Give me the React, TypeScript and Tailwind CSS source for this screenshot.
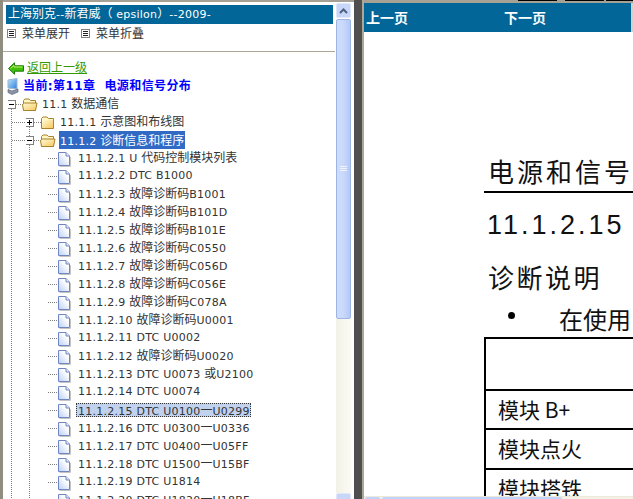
const textFont = '[font-family:"DejaVu_Sans","Noto_Sans_CJK_SC",sans-serif]'

type Row = { level: number; label: string; kind: 'open' | 'closed' | 'file'; state?: 'section' | 'focus' }

const rows: Row[] = [
  { level: 0, label: '11.1 数据通信', kind: 'open' },
  { level: 1, label: '11.1.1 示意图和布线图', kind: 'closed' },
  { level: 1, label: '11.1.2 诊断信息和程序', kind: 'open', state: 'section' },
  { level: 2, label: '11.1.2.1 U 代码控制模块列表', kind: 'file' },
  { level: 2, label: '11.1.2.2 DTC B1000', kind: 'file' },
  { level: 2, label: '11.1.2.3 故障诊断码B1001', kind: 'file' },
  { level: 2, label: '11.1.2.4 故障诊断码B101D', kind: 'file' },
  { level: 2, label: '11.1.2.5 故障诊断码B101E', kind: 'file' },
  { level: 2, label: '11.1.2.6 故障诊断码C0550', kind: 'file' },
  { level: 2, label: '11.1.2.7 故障诊断码C056D', kind: 'file' },
  { level: 2, label: '11.1.2.8 故障诊断码C056E', kind: 'file' },
  { level: 2, label: '11.1.2.9 故障诊断码C078A', kind: 'file' },
  { level: 2, label: '11.1.2.10 故障诊断码U0001', kind: 'file' },
  { level: 2, label: '11.1.2.11 DTC U0002', kind: 'file' },
  { level: 2, label: '11.1.2.12 故障诊断码U0020', kind: 'file' },
  { level: 2, label: '11.1.2.13 DTC U0073 或U2100', kind: 'file' },
  { level: 2, label: '11.1.2.14 DTC U0074', kind: 'file' },
  { level: 2, label: '11.1.2.15 DTC U0100一U0299', kind: 'file', state: 'focus' },
  { level: 2, label: '11.1.2.16 DTC U0300一U0336', kind: 'file' },
  { level: 2, label: '11.1.2.17 DTC U0400一U05FF', kind: 'file' },
  { level: 2, label: '11.1.2.18 DTC U1500一U15BF', kind: 'file' },
  { level: 2, label: '11.1.2.19 DTC U1814', kind: 'file' },
  { level: 2, label: '11.1.2.20 DTC U1820一U18BF', kind: 'file' },
]

// chinese glyphs are a pixel bigger than the latin ones in the shot
function Mixed({ text }: { text: string }) {
  const parts = text.split(/([\u4e00-\u9fff\uff08\uff09]+)/)
  return (
    <span className="whitespace-pre tracking-[0.25px]">
      {parts.map((p, i) =>
        /[\u4e00-\u9fff\uff08\uff09]/.test(p) ? (
          <span key={i} className="text-[12px] tracking-normal">{p}</span>
        ) : (
          <span key={i}>{p}</span>
        ),
      )}
    </span>
  )
}

function Guide({ line = true, branch }: { line?: boolean; branch?: boolean }) {
  return (
    <svg width="18" height="18" className="shrink-0" shapeRendering="crispEdges">
      {line && <path d="M3.5 0V18" stroke="#808080" strokeDasharray="1 1" />}
      {branch && <path d="M4 9.5H18" stroke="#808080" strokeDasharray="1 1" />}
    </svg>
  )
}

function Expander({ open, above }: { open: boolean; above?: boolean }) {
  return (
    <svg width="18" height="18" className="shrink-0" shapeRendering="crispEdges">
      {above && <path d="M3.5 0V5" stroke="#808080" strokeDasharray="1 1" />}
      <path d="M3.5 14V18" stroke="#808080" strokeDasharray="1 1" />
      <path d="M8 9.500H18" stroke="#808080" strokeDasharray="1 1" />
      <rect x="-0.500" y="5.500" width="8" height="8" fill="#fff" stroke="#808080" />
      <path d="M1 9.500H6" stroke="#000" />
      {!open && <path d="M3.500 7V12" stroke="#000" />}
    </svg>
  )
}

function FolderIcon({ open }: { open: boolean }) {
  return (
    <svg width="16" height="14" viewBox="0 0 16 14" className="mt-[1px] shrink-0">
      <defs>
        <linearGradient id="folder" x1="0" y1="0" x2="1" y2="1">
          <stop offset="0" stopColor="#fffbd8" />
          <stop offset="1" stopColor="#f6c75c" />
        </linearGradient>
      </defs>
      <path d="M1.500 2.500 3 1h4l1.500 1.500h5v10h-12z" fill="#fff6c4" stroke="#a9822c" />
      {open ? (
        <path d="M.5 6.500 2.500 5h12.500l-1.500 7.500h-12z" fill="url(#folder)" stroke="#a9822c" />
      ) : (
        <path d="M2 4h11v8H2z" fill="url(#folder)" />
      )}
    </svg>
  )
}

function FileIcon() {
  return (
    <svg width="13" height="15" viewBox="0 0 13 15" className="mt-[3px] shrink-0">
      <defs>
        <linearGradient id="page" x1="0" y1="1" x2="1" y2="0">
          <stop offset="0" stopColor="#bdcff5" />
          <stop offset="0.7" stopColor="#ffffff" />
        </linearGradient>
      </defs>
      <path d="M.5.5h7.500l3.500 3.500v9.500h-11z" fill="url(#page)" stroke="#6f86c4" />
      <path d="M8 .5v3.500h3.500" fill="#dfe7fa" stroke="#6f86c4" />
      <path d="M1.500 14.500h11V5" fill="none" stroke="#c4c4c4" />
    </svg>
  )
}

function BackArrow() {
  return (
    <svg width="16" height="13" viewBox="0 0 16 13" className="mt-[1px] shrink-0">
      <path d="M.5 6.500 6.500.8V3.800H15.500V9.200H6.500V12.200Z" fill="#3fc20c" stroke="#1c7a04" />
      <path d="M2.500 6.500 6 3.500V5H14.500" fill="none" stroke="#c7f06a" />
    </svg>
  )
}

function PcIcon() {
  return (
    <svg width="12" height="17" viewBox="0 0 12 17" className="shrink-0">
      <defs>
        <linearGradient id="screen" x1="0" y1="0" x2="1" y2="1">
          <stop offset="0" stopColor="#bfe6fb" />
          <stop offset="1" stopColor="#2a7fe0" />
        </linearGradient>
      </defs>
      <path d="M1 2 10 .5V11L1 10z" fill="url(#screen)" stroke="#9db6cf" />
      <path d="M1 11.500l4 1.500 6-2v3l-6 2.500-4-2z" fill="#8d95a8" stroke="#5b6273" strokeWidth=".7" />
    </svg>
  )
}

function MenuIcon() {
  return (
    <svg width="9" height="9" className="shrink-0" shapeRendering="crispEdges">
      <rect x=".5" y=".5" width="8" height="8" fill="#fff" stroke="#808080" />
      <path d="M2 2.500h5M2 4.500h5M2 6.500h5" stroke="#222" />
    </svg>
  )
}

function TreeRow({ row }: { row: Row }) {
  const isFile = row.kind === 'file'
  const isSection = row.state === 'section'
  const isFocus = row.state === 'focus'
  return (
    <div className="flex h-[18px] items-center whitespace-nowrap">
      {row.level === 1 && <Guide branch />}
      {row.level === 2 && <Guide />}
      {row.level === 2 && <Guide />}
      {isFile ? <Guide line={false} branch /> : <Expander open={row.kind === 'open'} above={isSection} />}
      <div className="ml-[-4px]">{isFile ? <FileIcon /> : <FolderIcon open={row.kind === 'open'} />}</div>
      <span
        className={`block ${isFile ? 'ml-[5px] pl-[2px] pr-[1px]' : 'ml-[3px] px-[1px]'} ${
          isSection ? 'h-[18px] bg-[#316ac5] leading-[20px] text-white' : 'text-[#333333]'
        } ${isFocus ? 'h-[14px] bg-[#c1d2ee] leading-[16px] outline-1 outline-dotted outline-[#333333] outline-offset-[-1px]' : ''} ${
          !isSection && !isFocus ? 'mt-[1px]' : ''
        }`}
      >
        <Mixed text={row.label} />
      </span>
    </div>
  )
}

function LeftScrollbar() {
  return (
    <div className="flex w-[15px] shrink-0 flex-col">
      <div className="flex h-[15px] shrink-0 items-center justify-center rounded-[2px] border border-[#dfe7fb] bg-[#c8d7f8]">
        <svg width="9" height="6" viewBox="0 0 9 6"><path d="M1 5l3.500-3.500L8 5" fill="none" stroke="#4d6185" strokeWidth="2" /></svg>
      </div>
      <div className="mt-[1px] flex h-[300px] shrink-0 items-center justify-center rounded-[2px] border border-[#9db4e6] bg-gradient-to-r from-[#cfdcfb] via-[#c9d8fb] to-[#b2c8f6]">
        <svg width="7" height="6" shapeRendering="crispEdges"><path d="M0 .5h7M0 2.500h7M0 4.500h7" stroke="#eef3ff" /></svg>
      </div>
      <div className="h-[174px] shrink-0 bg-gradient-to-r from-[#f3f1e6] to-[#fbfaf5]" />
      <div className="h-[15px] shrink-0 rounded-[2px] border border-[#dfe7fb] bg-[#c8d7f8]" />
    </div>
  )
}

export default function App() {
  return (
    <div className={`flex h-[499px] w-[633px] overflow-hidden bg-[#ece9d8] ${textFont} text-[11px]`}>
      <div className="w-[3px] shrink-0 bg-[#8f8d80]" />
      <div className="flex w-[351px] shrink-0 flex-col border-t-[2px] border-[#a5a295] bg-white">
        <div className="flex min-h-0 flex-1">
          <div className="w-[332px] shrink-0 overflow-hidden pt-[3px]">
            <div className="ml-[3px] mr-[2px] flex h-[19px] items-center bg-[#026698] pl-[2px] text-white">
              <Mixed text="上海别克--新君威（ epsilon）--2009-" />
            </div>
            <div className="flex h-[28px] items-center gap-[6px] border-b border-[#aca899] pb-[8px] pl-[4px] text-[12px] text-[#333333]">
              <MenuIcon />
              <span>菜单展开</span>
              <div className="ml-[5px]"><MenuIcon /></div>
              <span>菜单折叠</span>
            </div>
            <div className="ml-[5px] mt-[9px] flex h-[14px] items-center gap-[3px]">
              <BackArrow />
              <span className="text-[12px] leading-none text-[#339900] underline">返回上一级</span>
            </div>
            <div className="ml-[4px] mt-[2px] flex h-[18px] items-center gap-[4px]">
              <PcIcon />
              <span className="whitespace-nowrap text-[12px] font-bold leading-none tracking-[0.4px] text-[#0000ff]">当前:第11章&nbsp; 电源和信号分布</span>
            </div>
            <div className="ml-[5px]">
              {rows.map((r) => (
                <TreeRow key={r.label} row={r} />
              ))}
            </div>
          </div>
          <div className="ml-[1px] pt-[1px]"><LeftScrollbar /></div>
        </div>
      </div>
      <div className="w-[10px] shrink-0 border-r-[2px] border-[#aca899] bg-[#4f4f4f]" />
      <div className="flex min-w-0 flex-1 flex-col bg-white">
        <div className="flex h-[3px] shrink-0 items-start gap-[2px] bg-[#a5a295] pl-[154px]">
          <div className="h-[1px] w-[39px] bg-black" />
          <div className="ml-[6px] h-[1px] w-[39px] bg-black" />
          <div className="h-[1px] flex-1 bg-black" />
        </div>
        <div className="flex h-[29px] shrink-0 items-center bg-[#026698] text-[14px] font-bold text-white [font-family:'Noto_Sans_CJK_SC',serif]">
          <span className="ml-[2px] w-[138px]">上一页</span>
          <span>下一页</span>
          <div className="ml-auto h-full w-[2px] bg-[#d4d0c8]" />
        </div>
        <div className="min-h-0 flex-1 overflow-hidden whitespace-nowrap pl-[120px] pt-[119px] text-[#111111] [font-family:'Noto_Sans_CJK_SC',sans-serif]">
          <div className="h-[42px] w-[200px] border-b-[2px] border-black pl-[4px] text-[26px] leading-[40px] tracking-[3px]">电源和信号</div>
          <div className="mt-[12px] h-[40px] pl-[3px] text-[27px] leading-[40px] tracking-[3px] [font-family:'Liberation_Sans',sans-serif]">11.1.2.15</div>
          <div className="mt-[12px] h-[40px] pl-[4px] text-[26px] leading-[40px] tracking-[2.5px]">诊断说明</div>
          <div className="flex h-[40px] items-start pl-[24px]">
            <span className="mt-[15px] h-[7px] w-[7px] rounded-full bg-black" />
            <span className="ml-[44px] text-[24px] leading-[44px]">在使用</span>
          </div>
          <div className="w-[200px] border-[2px] border-r-0 border-black text-[21px]">
            <div className="h-[52px] border-b-[2px] border-black" />
            <div className="flex h-[39px] items-center border-b-[2px] border-black pl-[12px]">模块 B+</div>
            <div className="flex h-[40px] items-center border-b-[2px] border-black pl-[12px]">模块点火</div>
            <div className="flex h-[38px] items-center pl-[12px]">模块搭铁</div>
          </div>
        </div>
        <div className="flex h-[3px] shrink-0 gap-[2px] overflow-hidden border-t border-[#ece9d8] bg-[#f4f2e8] pl-[1px]">
          <div className="h-[15px] w-[15px] rounded-[2px] bg-[#c1d3fb]" />
          <div className="h-[15px] w-[180px] rounded-[2px] bg-[#c1d3fb]" />
        </div>
      </div>
    </div>
  )
}
